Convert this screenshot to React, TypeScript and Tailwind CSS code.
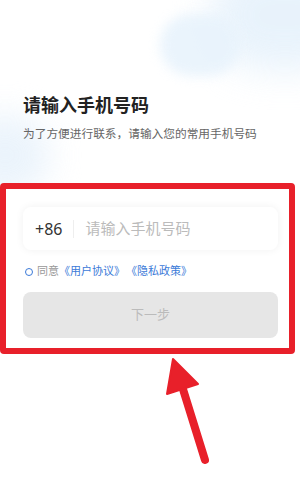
import React, { useState } from 'react';

const App: React.FC = () => {
  const [phone, setPhone] = useState('');
  const [agreed, setAgreed] = useState(false);

  return (
    <div className="relative w-[300px] h-[497px] overflow-hidden bg-white font-['Noto_Sans','Noto_Sans_CJK_SC',sans-serif]">
      {/* soft blue background blobs */}
      <div className="absolute -top-[40px] left-[210px] w-[150px] h-[110px] rounded-full bg-[#e3f0fb] blur-[18px] opacity-80" />
      <div className="absolute top-[14px] left-[160px] w-[80px] h-[62px] rounded-full bg-[#e8f3fc] blur-[6px] opacity-90" />
      <div className="absolute top-[115px] -left-[40px] w-[90px] h-[80px] rounded-full bg-[#e6f1fb] blur-[16px] opacity-80" />

      <div className="relative flex flex-col">
        <div className="pl-[23px] pt-[92px]">
          <h1 className="text-[18px] leading-[26px] font-bold text-[#222]">请输入手机号码</h1>
          <p className="mt-[6px] text-[11.7px] leading-[18px] text-[#666]">为了方便进行联系，请输入您的常用手机号码</p>
        </div>

        <div className="mt-[41px] mr-[5px] border-[6px] border-[#e8202a] rounded-[4px] pl-[17px] pr-[11px] pt-[18px] pb-[10px] bg-white">
          <div className="flex items-center h-[43px] rounded-[8px] bg-white shadow-[0_0_8px_rgba(0,0,0,0.06)] px-[12px]">
            <span className="text-[16px] text-[#333]">+86</span>
            <span className="mx-[11px] w-px h-[18px] bg-[#eee]" />
            <input
              value={phone}
              onChange={(e) => setPhone(e.target.value)}
              placeholder="请输入手机号码"
              className="flex-1 min-w-0 text-[15px] text-[#333] placeholder:text-[#bbb] outline-none bg-transparent"
            />
          </div>

          <div className="flex items-center h-[17px] mt-[13px] text-[11px]" onClick={() => setAgreed(!agreed)}>
            <span className={`w-[8px] h-[8px] rounded-full border border-[#3b7ad8] ml-[2px] ${agreed ? 'bg-[#3b7ad8]' : ''}`} />
            <span className="ml-[4px] text-[#999]">同意</span>
            <span className="text-[#3b7ad8]">《用户协议》</span>
            <span className="ml-[1px] text-[#3b7ad8]">《隐私政策》</span>
          </div>

          <button className="mt-[12px] w-full h-[46px] rounded-[8px] bg-[#e6e6e6] text-[13px] text-[#bbb]">
            下一步
          </button>
        </div>

        <svg className="block w-[300px] h-[144px]" viewBox="0 0 300 144">
          <line x1="182" y1="32" x2="205" y2="106" stroke="#e8202a" strokeWidth="8" strokeLinecap="round" />
          <polygon points="173,5 167,40 198,30" fill="#e8202a" stroke="#e8202a" strokeWidth="2" strokeLinejoin="round" />
        </svg>
      </div>
    </div>
  );
};

export default App;
